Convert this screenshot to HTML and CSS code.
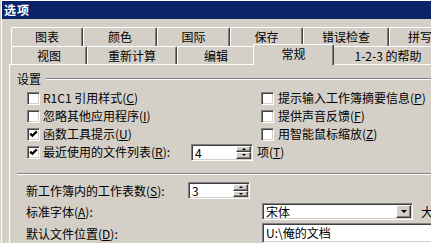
FILE: index.html
```html
<!DOCTYPE html>
<html lang="zh-CN">
<head>
<meta charset="utf-8">
<title>选项</title>
<link rel="stylesheet" href="styles.css">
</head>
<body>
<div class="window">
  <div class="frame">
    <div class="titlebar">选项</div>
    <div class="dialog">
      <div class="tabs">
        <div class="tabrow back">
          <div class="tab t-chart">图表</div>
          <div class="tab t-color">颜色</div>
          <div class="tab t-intl">国际</div>
          <div class="tab t-save">保存</div>
          <div class="tab t-err">错误检查</div>
          <div class="tab t-spell">拼写检查</div>
        </div>
        <div class="tabrow front">
          <div class="tab t-view">视图</div>
          <div class="tab t-calc">重新计算</div>
          <div class="tab t-edit">编辑</div>
          <div class="tab t-gen sel">常规</div>
          <div class="tab t-123">1-2-3 的帮助</div>
        </div>
      </div>
      <div class="panel">
        <div class="group-head"><span>设置</span><span class="rule"></span></div>
        <div class="checks">
          <div class="check"><span class="box"></span><span>R1C1 引用样式(<u>C</u>)</span></div>
          <div class="check right"><span class="box"></span><span>提示输入工作簿摘要信息(<u>P</u>)</span></div>
          <div class="check"><span class="box"></span><span>忽略其他应用程序(<u>I</u>)</span></div>
          <div class="check right"><span class="box"></span><span>提供声音反馈(<u>F</u>)</span></div>
          <div class="check"><span class="box"><svg class="tick" width="9" height="9" viewBox="0 0 9 9"><polyline points="1.2,3.6 3.4,5.8 7.8,1.4" fill="none" stroke="#000" stroke-width="2.2"/></svg></span><span>函数工具提示(<u>U</u>)</span></div>
          <div class="check right"><span class="box"></span><span>用智能鼠标缩放(<u>Z</u>)</span></div>
          <div class="check recent">
            <span class="box"><svg class="tick" width="9" height="9" viewBox="0 0 9 9"><polyline points="1.2,3.6 3.4,5.8 7.8,1.4" fill="none" stroke="#000" stroke-width="2.2"/></svg></span>
            <span class="lbl">最近使用的文件列表(<u>R</u>):</span>
            <span class="spin"><span class="val">4</span><span class="btns"><span class="sbtn"><span class="arr up"></span></span><span class="sbtn"><span class="arr down"></span></span></span></span>
            <span class="unit">项(<u>T</u>)</span>
          </div>
        </div>
        <div class="sep"></div>
        <div class="field row-a">
          <span class="flbl w162">新工作簿内的工作表数(<u>S</u>):</span>
          <span class="spin"><span class="val">3</span><span class="btns"><span class="sbtn"><span class="arr up"></span></span><span class="sbtn"><span class="arr down"></span></span></span></span>
        </div>
        <div class="field row-b">
          <span class="flbl w236">标准字体(<u>A</u>):</span>
          <span class="combo"><span class="val">宋体</span><span class="dbtn"><span class="arr down"></span></span></span>
          <span class="size">大小(<u>Z</u>):</span>
        </div>
        <div class="field row-c">
          <span class="flbl w236">默认文件位置(<u>D</u>):</span>
          <span class="textbox">U:\俺的文档</span>
        </div>
      </div>
    </div>
  </div>
</div>
</body>
</html>
```

FILE: styles.css
```css
* { box-sizing: border-box; }
html, body { margin: 0; padding: 0; }
body {
  width: 431px;
  height: 243px;
  overflow: hidden;
  background: #d4d0c8;
  font-family: "Noto Sans CJK SC", "Noto Sans", sans-serif;
  font-size: 12px;
  color: #000;
}
u { text-decoration: underline; text-underline-offset: 1px; }

.window {
  width: 540px;
  border-top: 1px solid #ffffff;
  border-left: 1px solid #d4d0c8;
}
.frame {
  border-left: 1px solid #ffffff;
  background: #d4d0c8;
}
.titlebar {
  height: 18px;
  background: #0a246a;
  color: #fff;
  font-weight: bold;
  line-height: 18px;
  padding-left: 2px;
  letter-spacing: 1px;
}
.dialog { padding: 8px 0 0 7px; }
.tabs { margin-left: 2px; }
.tabrow { display: flex; }
.tab {
  flex: none;
  text-align: center;
  white-space: nowrap;
  background: #d4d0c8;
  border-top: 1px solid #ffffff;
  border-left: 1px solid #ffffff;
  border-right: 1px solid #404040;
  box-shadow: inset -1px 0 #808080;
  border-radius: 2px 2px 0 0;
}
.back .tab { height: 19px; line-height: 18px; }
.front .tab { height: 18px; line-height: 17px; }
.front .tab.sel {
  height: 21px;
  line-height: 18px;
  margin: -2px -1px -1px -2px;
  position: relative;
  z-index: 2;
}
.t-chart { width: 72px; }
.t-color { width: 74px; }
.t-intl { width: 73px; }
.t-save { width: 73px; }
.t-err { width: 86px; }
.t-spell { width: 86px; }
.t-view { width: 76px; }
.t-calc { width: 90px; }
.t-edit { width: 78px; }
.t-gen { width: 81px; }
.t-123 { width: 110px; }

.panel {
  border-top: 1px solid #ffffff;
  border-left: 1px solid #ffffff;
  height: 200px;
  padding-top: 7px;
}
.group-head {
  display: flex;
  align-items: center;
  height: 14px;
  line-height: 14px;
  padding-left: 7px;
}
.group-head .rule {
  flex: 1;
  margin-left: 5px;
  border-top: 1px solid #808080;
  border-bottom: 1px solid #ffffff;
}
.checks {
  display: grid;
  grid-template-columns: 234px auto;
  grid-auto-rows: 18px;
  margin-top: 3px;
  padding-left: 17px;
}
.check {
  display: flex;
  align-items: center;
  gap: 3px;
  white-space: nowrap;
  line-height: 18px;
}
.check.right { gap: 4px; }
.box {
  flex: none;
  width: 13px;
  height: 13px;
  background: #fff;
  border: 1px solid;
  border-color: #808080 #ffffff #ffffff #808080;
  box-shadow: inset 1px 1px #404040, inset -1px -1px #d4d0c8;
  padding: 1px;
  display: flex;
}
.tick { display: block; }
.recent { grid-column: 1 / -1; }
.recent .lbl { width: 145px; flex: none; }
.unit { margin-left: 1px; }

.spin, .combo, .textbox {
  display: flex;
  flex: none;
  background: #fff;
  border: 1px solid;
  border-color: #808080 #ffffff #ffffff #808080;
  box-shadow: inset 1px 1px #404040, inset -1px -1px #d4d0c8;
  padding: 1px;
}
.spin { width: 62px; height: 17px; }
.val { flex: 1; line-height: 13px; padding-left: 2px; white-space: nowrap; }
.btns { width: 15px; display: flex; flex-direction: column; }
.sbtn, .dbtn {
  flex: 1;
  background: #d4d0c8;
  border: 1px solid;
  border-color: #ffffff #404040 #404040 #ffffff;
  box-shadow: inset -1px -1px #808080;
  display: flex;
  align-items: center;
  justify-content: center;
}
.dbtn { flex: none; width: 15px; }
.arr { width: 0; height: 0; border-left: 3px solid transparent; border-right: 3px solid transparent; }
.arr.up { border-bottom: 3px solid #000; }
.arr.down { border-top: 3px solid #000; }
.sbtn .arr { border-left-width: 2px; border-right-width: 2px; }
.sbtn .arr.up { border-bottom-width: 2px; }
.sbtn .arr.down { border-top-width: 2px; }

.sep {
  margin: 12px 0 0 7px;
  border-top: 1px solid #808080;
  border-bottom: 1px solid #ffffff;
}
.field {
  display: flex;
  align-items: center;
  padding-left: 16px;
  white-space: nowrap;
}
.flbl { flex: none; }
.w162 { width: 162px; }
.w236 { width: 236px; }
.row-a { margin-top: 7px; height: 17px; }
.row-b { margin-top: 4px; height: 17px; }
.row-c { margin-top: 3px; height: 20px; }
.combo { width: 151px; height: 17px; }
.size { margin-left: 8px; }
.textbox { width: 250px; height: 20px; line-height: 16px; padding-left: 3px; }
```
